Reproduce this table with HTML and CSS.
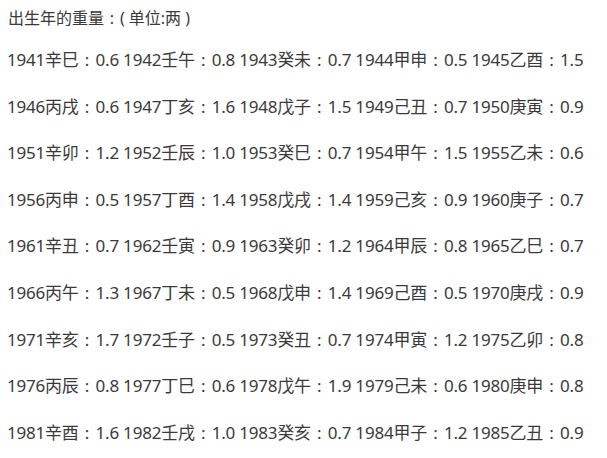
FILE: index.html
```html
<!DOCTYPE html>
<html lang="zh-CN">
<head>
<meta charset="utf-8">
<link rel="stylesheet" href="styles.css">
</head>
<body>
<div class="page">
  <p class="title">出生年的重量<span class="c">:</span><span class="po">(</span>单位:两<span class="pc">)</span></p>
  <p class="row">1941辛巳<span class="c">:</span>0.6 1942壬午<span class="c">:</span>0.8 1943癸未<span class="c">:</span>0.7 1944甲申<span class="c">:</span>0.5 1945乙酉<span class="c">:</span>1.5</p>
  <p class="row">1946丙戌<span class="c">:</span>0.6 1947丁亥<span class="c">:</span>1.6 1948戊子<span class="c">:</span>1.5 1949己丑<span class="c">:</span>0.7 1950庚寅<span class="c">:</span>0.9</p>
  <p class="row">1951辛卯<span class="c">:</span>1.2 1952壬辰<span class="c">:</span>1.0 1953癸巳<span class="c">:</span>0.7 1954甲午<span class="c">:</span>1.5 1955乙未<span class="c">:</span>0.6</p>
  <p class="row">1956丙申<span class="c">:</span>0.5 1957丁酉<span class="c">:</span>1.4 1958戊戌<span class="c">:</span>1.4 1959己亥<span class="c">:</span>0.9 1960庚子<span class="c">:</span>0.7</p>
  <p class="row">1961辛丑<span class="c">:</span>0.7 1962壬寅<span class="c">:</span>0.9 1963癸卯<span class="c">:</span>1.2 1964甲辰<span class="c">:</span>0.8 1965乙巳<span class="c">:</span>0.7</p>
  <p class="row">1966丙午<span class="c">:</span>1.3 1967丁未<span class="c">:</span>0.5 1968戊申<span class="c">:</span>1.4 1969己酉<span class="c">:</span>0.5 1970庚戌<span class="c">:</span>0.9</p>
  <p class="row">1971辛亥<span class="c">:</span>1.7 1972壬子<span class="c">:</span>0.5 1973癸丑<span class="c">:</span>0.7 1974甲寅<span class="c">:</span>1.2 1975乙卯<span class="c">:</span>0.8</p>
  <p class="row">1976丙辰<span class="c">:</span>0.8 1977丁巳<span class="c">:</span>0.6 1978戊午<span class="c">:</span>1.9 1979己未<span class="c">:</span>0.6 1980庚申<span class="c">:</span>0.8</p>
  <p class="row">1981辛酉<span class="c">:</span>1.6 1982壬戌<span class="c">:</span>1.0 1983癸亥<span class="c">:</span>0.7 1984甲子<span class="c">:</span>1.2 1985乙丑<span class="c">:</span>0.9</p>
</div>
</body>
</html>
```
FILE: styles.css
```css
html, body {
  margin: 0;
  padding: 0;
  background: #ffffff;
}
.page {
  padding: 0 0 0 7px;
  font-family: "Noto Sans", "Noto Sans CJK SC", sans-serif;
  font-size: 17px;
  color: #3a3a3a;
  white-space: nowrap;
}
.page p {
  margin: 0;
  height: 46.6px;
  line-height: 46.6px;
}
.page .row {
  letter-spacing: -0.22px;
}
.page .title {
  font-size: 16px;
  padding-left: 1px;
  height: 37px;
  line-height: 36px;
}
.c {
  display: inline-block;
  width: 1em;
  text-align: center;
  letter-spacing: 0;
}
.po {
  margin-right: 4px;
}
.pc {
  margin-left: 4px;
}
```
